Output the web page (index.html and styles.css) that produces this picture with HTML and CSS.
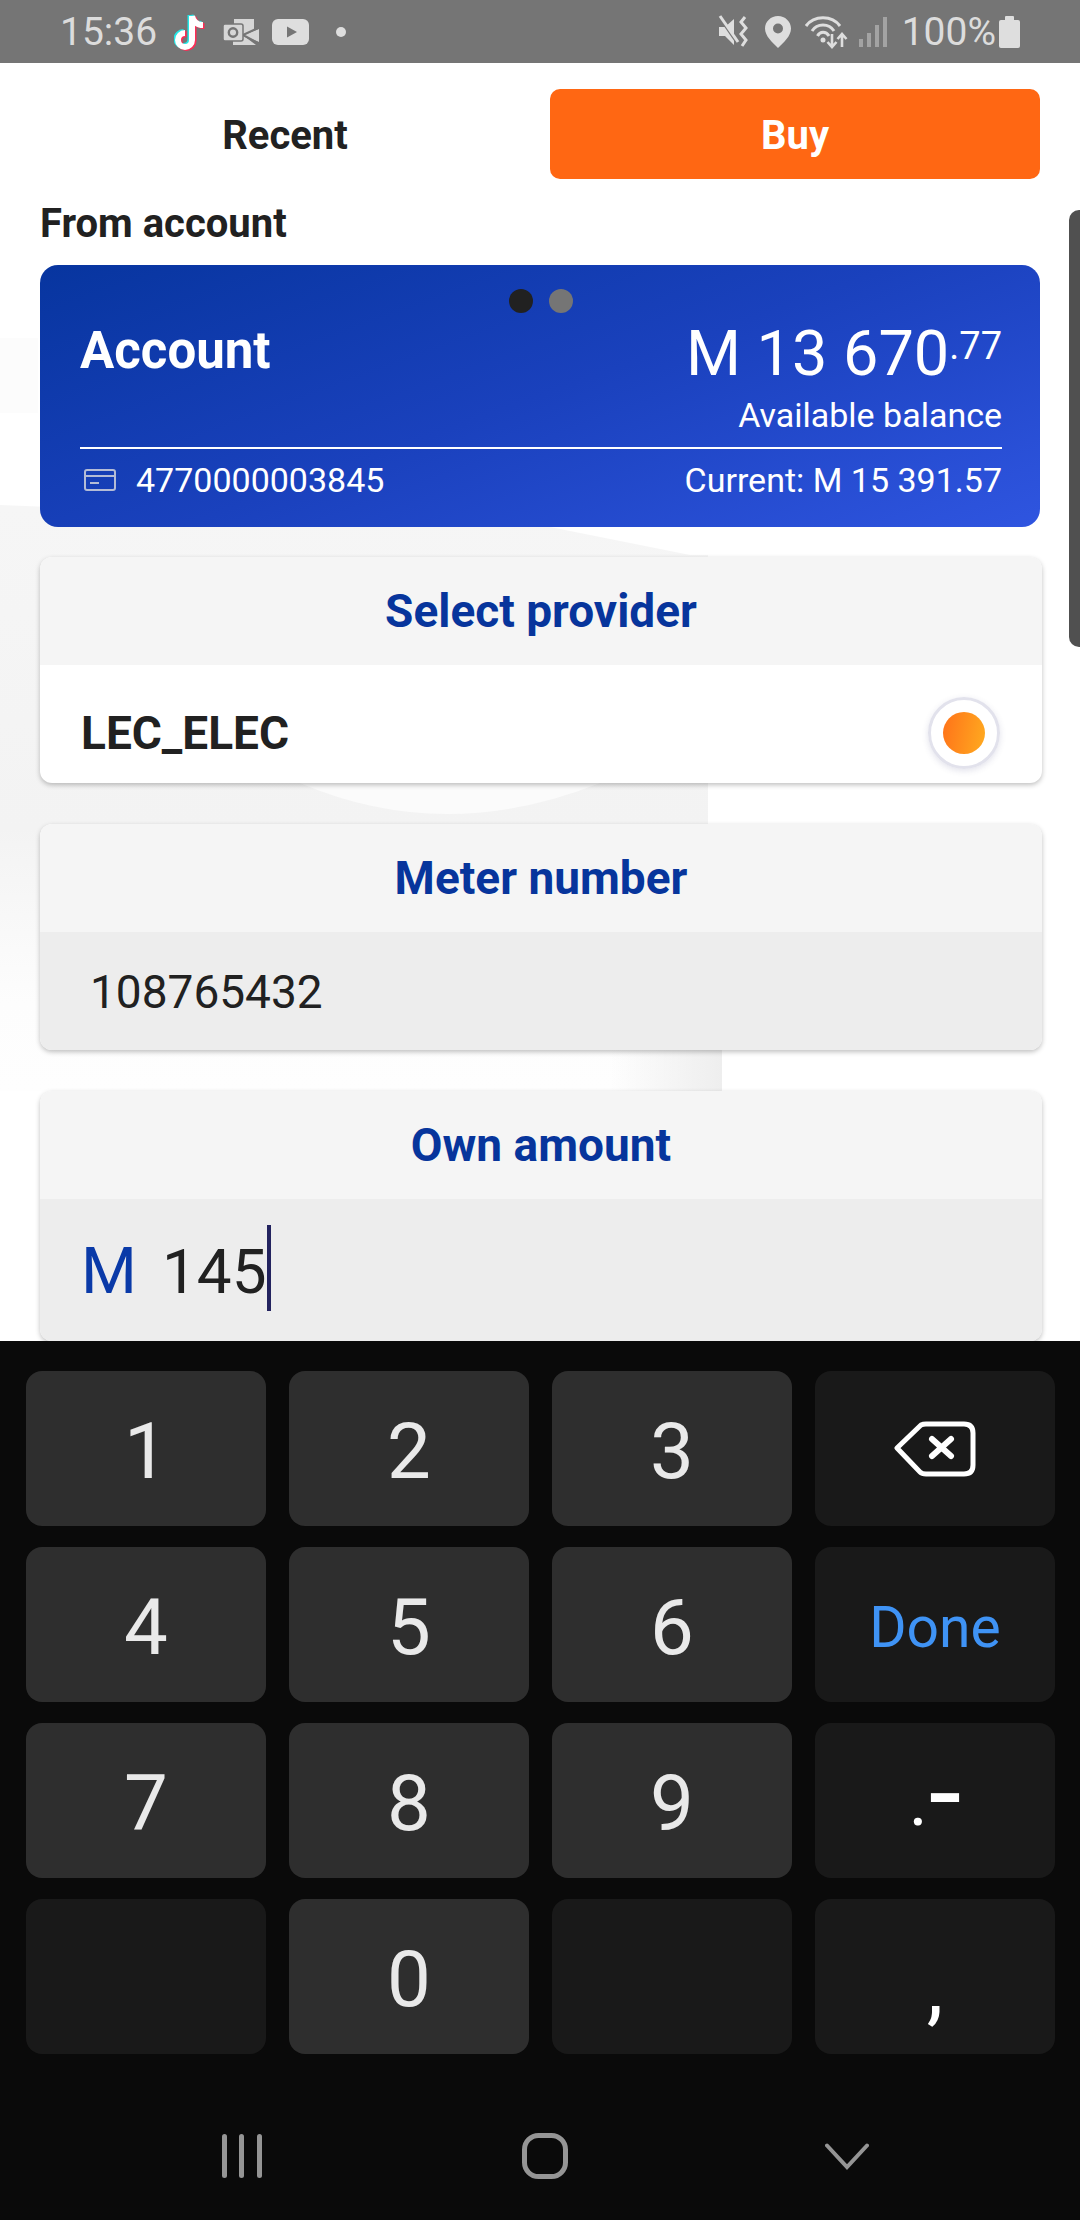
FILE: index.html
```html
<!DOCTYPE html>
<html lang="en">
<head>
    <meta charset="UTF-8">
    <meta name="viewport" content="width=device-width, initial-scale=1.0">
    <title>Buy electricity</title>
    <link rel="stylesheet" href="styles.css">
</head>
<body>
    <!-- status bar -->
    <div class="status-bar">
        <div class="status-left">
            <span class="clock">15:36</span>
            <svg class="ic-tiktok" width="34" height="38" viewBox="0 0 34 38" fill="none" stroke-width="6">
                <path d="M18 3V27a7 7 0 1 1-7-7M18 3c1 5 5 9 11 9" stroke="#25e6e6" transform="translate(-1.5 -1)"/>
                <path d="M18 3V27a7 7 0 1 1-7-7M18 3c1 5 5 9 11 9" stroke="#fd2c55" transform="translate(1.5 1)"/>
                <path d="M18 3V27a7 7 0 1 1-7-7M18 3c1 5 5 9 11 9" stroke="#fff"/>
            </svg>
            <svg class="ic-mail" width="36" height="28" viewBox="0 0 36 28">
                <path d="M11 1H31V12L21 17L36 11V24L21 18L33 27H10V21H11Z" fill="#d6d6d6"/>
                <path d="M20 17L35 10M20 17L35 25" stroke="#757575" stroke-width="2" fill="none"/>
                <rect x="0" y="6" width="20" height="17" rx="2" fill="#d6d6d6" stroke="#757575" stroke-width="1.5"/>
                <circle cx="10" cy="14.5" r="4.2" fill="none" stroke="#757575" stroke-width="2.4"/>
            </svg>
            <svg class="ic-yt" width="37" height="26" viewBox="0 0 37 26">
                <rect width="37" height="26" rx="6" fill="#dedede"/>
                <path d="M15 7.5L25 13L15 18.5Z" fill="#757575"/>
            </svg>
            <span class="status-dot"></span>
        </div>
        <div class="status-right">
            <svg width="33" height="33" viewBox="0 0 33 33">
                <path d="M1 12H7L16 4V30L7 21H1Z" fill="#dedede"/>
                <path d="M2 3L20 29" stroke="#757575" stroke-width="3"/>
                <path d="M2 1L20 27" stroke="#dedede" stroke-width="3"/>
                <path d="M27 2L23 7L28 13L23 19L28 25L24 31" stroke="#dedede" stroke-width="3" fill="none"/>
            </svg>
            <svg class="ic-pin" width="26" height="32" viewBox="0 0 26 32">
                <path fill-rule="evenodd" d="M13 0C6 0 0 5.500 0 12.500C0 20 7 26 13 32C19 26 26 20 26 12.500C26 5.500 20 0 13 0ZM13 7.500a5 5 0 1 1 0 10a5 5 0 1 1 0-10Z" fill="#dedede"/>
            </svg>
            <svg class="ic-wifi" width="43" height="34" viewBox="0 0 43 34" fill="none" stroke="#dedede">
                <path d="M1 11C9 0 27 0 35 11" stroke-width="3"/>
                <path d="M7 16C12 8 24 8 29 16" stroke-width="3"/>
                <path d="M12.500 21C15 16 21 16 24 21" stroke-width="3"/>
                <circle cx="18" cy="25" r="2.500" fill="#dedede" stroke="none"/>
                <path d="M27 19V32M22.500 27L27 32L31.500 27" stroke-width="2.600"/>
                <path d="M37 32V19M32.500 24L37 19L41.500 24" stroke-width="2.600"/>
            </svg>
            <svg class="ic-signal" width="28" height="30" viewBox="0 0 28 30" fill="#a3a3a3">
                <rect x="0" y="22" width="4" height="8"/>
                <rect x="8" y="16" width="4" height="14"/>
                <rect x="16" y="8" width="4" height="22"/>
                <rect x="24" y="0" width="4" height="30"/>
            </svg>
            <span class="batt-text">100%</span>
            <svg class="ic-batt" width="21" height="32" viewBox="0 0 21 32" fill="#dedede">
                <rect x="6" y="0" width="9" height="5" rx="1"/>
                <rect x="0" y="4" width="21" height="28" rx="2"/>
            </svg>
        </div>
    </div>

    <div class="screen">
        <!-- faint background picture -->
        <svg class="bg-art" width="1080" height="1278" viewBox="0 0 1080 1278">
            <defs>
                <linearGradient id="fade-down" x1="0" y1="0" x2="0" y2="1">
                    <stop offset="0" stop-color="#f6f6f6"/>
                    <stop offset="0.55" stop-color="#f3f3f3"/>
                    <stop offset="0.85" stop-color="#fdfdfd"/>
                    <stop offset="1" stop-color="#fefefe"/>
                </linearGradient>
                <linearGradient id="fade-side" x1="0" y1="0" x2="1" y2="0">
                    <stop offset="0" stop-color="#eeeeee" stop-opacity="0"/>
                    <stop offset="1" stop-color="#eeeeee"/>
                </linearGradient>
            </defs>
            <path d="M0 275H38V350H0Z" fill="#fcfcfc"/>
            <path d="M0 442L550 464L690 492L708 492V1028H0Z" fill="url(#fade-down)"/>
            <path d="M610 800H722V1028H610Z" fill="url(#fade-side)"/>
            <path d="M290 700L300 720Q445 782 600 720L610 700Z" fill="#fbfbfb"/>
        </svg>
        <div class="scrollbar"></div>

        <div class="tabs">
            <div class="tab">Recent</div>
            <div class="tab tab-active">Buy</div>
        </div>

        <div class="section-label">From account</div>

        <div class="account-card">
            <div class="dots"><span class="dot dot-on"></span><span class="dot"></span></div>
            <div class="account-top">
                <div class="account-name">Account</div>
                <div class="balance">M 13 670<span class="cents">.77</span></div>
            </div>
            <div class="balance-label">Available balance</div>
            <div class="account-bottom">
                <div class="account-no">
                    <svg width="32" height="22" viewBox="0 0 32 22" fill="none" stroke="#b4bcd6" stroke-width="2">
                        <rect x="1" y="1" width="30" height="20" rx="2"/>
                        <path d="M1 7H31"/>
                        <path d="M6 14H15"/>
                    </svg>
                    <span>4770000003845</span>
                </div>
                <div class="current">Current: M 15 391.57</div>
            </div>
        </div>

        <div class="field provider">
            <div class="field-head">Select provider</div>
            <div class="provider-row">
                <span class="provider-name">LEC_ELEC</span>
                <span class="radio"><span class="radio-in"></span></span>
            </div>
        </div>

        <div class="field meter">
            <div class="field-head">Meter number</div>
            <div class="meter-input">108765432</div>
        </div>

        <div class="field amount">
            <div class="field-head">Own amount</div>
            <div class="amount-input">
                <span class="currency">M</span>
                <span class="amount-value">145</span>
                <span class="caret"></span>
            </div>
        </div>
    </div>

    <!-- keyboard -->
    <div class="keyboard">
        <div class="keys">
            <div class="key">1</div>
            <div class="key">2</div>
            <div class="key">3</div>
            <div class="key key-dark key-back">
                <svg width="82" height="56" viewBox="0 0 82 56" fill="none" stroke="#fff" stroke-width="5" stroke-linejoin="round" stroke-linecap="round">
                    <path d="M3 27L27 4Q29 3 32 3H70Q79 3 79 12V44Q79 53 70 53H32Q28 53 26 51Z"/>
                    <path d="M38 18L57 35M57 18L38 35" stroke-width="6"/>
                </svg>
            </div>
            <div class="key">4</div>
            <div class="key">5</div>
            <div class="key">6</div>
            <div class="key key-dark key-done">Done</div>
            <div class="key">7</div>
            <div class="key">8</div>
            <div class="key">9</div>
            <div class="key key-dark key-sym">.<span class="dash">-</span></div>
            <div class="key key-dark"></div>
            <div class="key">0</div>
            <div class="key key-dark"></div>
            <div class="key key-dark key-comma">,</div>
        </div>
        <div class="nav-bar">
            <svg width="40" height="44" viewBox="0 0 40 44" fill="#959595">
                <rect x="0" y="0" width="5" height="44" rx="2.500"/>
                <rect x="17" y="0" width="5" height="44" rx="2.500"/>
                <rect x="35" y="0" width="5" height="44" rx="2.500"/>
            </svg>
            <svg class="nav-home" width="46" height="46" viewBox="0 0 46 46" fill="none" stroke="#959595" stroke-width="5">
                <rect x="2.500" y="2.500" width="41" height="41" rx="14"/>
            </svg>
            <svg width="44" height="27" viewBox="0 0 44 27" fill="none" stroke="#959595" stroke-width="4" stroke-linecap="round">
                <path d="M2 2.500L22 24L42 2.500"/>
            </svg>
        </div>
    </div>
</body>
</html>
```

FILE: styles.css
```css
* {
    box-sizing: border-box;
}

html, body {
    margin: 0;
    padding: 0;
}

body {
    width: 1080px;
    height: 2220px;
    overflow: hidden;
    background-color: #fff;
    font-family: Roboto, "Liberation Sans", sans-serif;
    color: #212121;
}

/* status bar */
.status-bar {
    height: 63px;
    background-color: #757575;
    display: flex;
    justify-content: space-between;
    align-items: center;
    padding: 0 60px 0 60px;
    color: #dcdcdc;
}

.status-left,
.status-right {
    display: flex;
    align-items: center;
}

.clock {
    font-size: 39px;
    margin-right: 17px;
}

.ic-tiktok {
    margin-right: 15px;
}

.ic-mail {
    margin-right: 13px;
}

.status-dot {
    width: 10px;
    height: 10px;
    margin-left: 27px;
    border-radius: 50%;
    background-color: #dedede;
}

.ic-pin {
    margin: 0 14px;
}

.ic-wifi {
    margin-right: 11px;
}

.ic-signal {
    margin-right: 1px;
}

.batt-text {
    font-size: 39px;
    margin: 0 3px 0 14px;
}

/* main screen */
.screen {
    position: relative;
    height: 1278px;
    padding: 26px 40px 0;
    overflow: hidden;
}

.bg-art {
    position: absolute;
    top: 0;
    left: 0;
}

.scrollbar {
    position: absolute;
    top: 147px;
    right: 0;
    width: 11px;
    height: 437px;
    background-color: #505050;
    border-radius: 10px 0 0 10px;
}

.tabs,
.section-label,
.account-card,
.field {
    position: relative;
}

.tabs {
    display: grid;
    grid-template-columns: 490px 490px;
    gap: 20px;
    height: 90px;
}

.tab {
    display: flex;
    align-items: center;
    justify-content: center;
    padding-top: 3px;
    font-size: 40px;
    font-weight: 700;
    border-radius: 10px;
}

.tab-active {
    background-color: #ff6713;
    color: #fff;
}

.section-label {
    height: 86px;
    padding-top: 25px;
    font-size: 40px;
    font-weight: 700;
    line-height: 40px;
}

/* account card */
.account-card {
    width: 1000px;
    height: 262px;
    padding: 24px 38px 0 40px;
    margin-bottom: 30px;
    border-radius: 18px;
    color: #fff;
    background: linear-gradient(160deg, #07359f 0%, #1a41bd 50%, #2f55e0 100%);
}

.dots {
    display: flex;
    justify-content: center;
    gap: 16px;
    height: 24px;
}

.dot {
    width: 24px;
    height: 24px;
    border-radius: 50%;
    background-color: #757575;
}

.dot-on {
    background-color: #212121;
}

.account-top {
    display: flex;
    justify-content: space-between;
    align-items: center;
    height: 74px;
}

.account-name {
    font-size: 51px;
    font-weight: 700;
}

.balance {
    font-size: 63px;
    line-height: 74px;
}

.cents {
    font-size: 38px;
    vertical-align: 16px;
}

.balance-label {
    text-align: right;
    font-size: 34px;
    line-height: 40px;
    padding-top: 8px;
    height: 60px;
}

.account-bottom {
    display: flex;
    justify-content: space-between;
    align-items: center;
    height: 50px;
    padding-top: 14px;
    border-top: 2px solid #fff;
    font-size: 34px;
}

.account-no {
    display: flex;
    align-items: center;
    gap: 20px;
    padding-left: 4px;
}

/* form fields */
.field {
    width: 1002px;
    border-radius: 12px;
    overflow: hidden;
    box-shadow: 0 2px 5px rgba(0, 0, 0, 0.25);
    background-color: #fff;
}

.provider {
    height: 226px;
    margin-bottom: 41px;
}

.meter {
    height: 226px;
    margin-bottom: 41px;
}

.amount {
    height: 250px;
}

.field-head {
    height: 108px;
    display: flex;
    align-items: center;
    justify-content: center;
    background-color: #f5f5f5;
    color: #07359c;
    font-size: 46px;
    font-weight: 700;
}

.provider-row {
    display: flex;
    justify-content: space-between;
    align-items: center;
    height: 118px;
    padding: 18px 42px 0 41px;
}

.provider-name {
    font-size: 46px;
    font-weight: 700;
}

.radio {
    display: flex;
    align-items: center;
    justify-content: center;
    width: 72px;
    height: 72px;
    border: 3px solid #e2e2ec;
    border-radius: 50%;
    box-shadow: 0 2px 6px rgba(60, 60, 120, 0.15);
}

.radio-in {
    width: 42px;
    height: 42px;
    border-radius: 50%;
    background: linear-gradient(100deg, #ff7219, #ffab20);
}

.meter-input {
    height: 118px;
    padding: 2px 0 0 50px;
    display: flex;
    align-items: center;
    background-color: #ededed;
    font-size: 46px;
}

.amount-input {
    height: 142px;
    padding: 26px 0 0 41px;
    display: flex;
    align-items: flex-start;
    background-color: #ededed;
    font-size: 62px;
    line-height: 86px;
}

.currency {
    padding-top: 4px;
    color: #0a3aa8;
    width: 81px;
    font-size: 64px;
}

.amount-value {
    padding-top: 4px;
}

.caret {
    width: 4px;
    height: 86px;
    background-color: #23235f;
}

/* keyboard */
.keyboard {
    height: 879px;
    background-color: #0a0a0a;
    padding-top: 30px;
}

.keys {
    display: grid;
    grid-template-columns: repeat(4, 240px);
    grid-auto-rows: 155px;
    column-gap: 23px;
    row-gap: 21px;
    padding-left: 26px;
}

.key {
    display: flex;
    align-items: center;
    justify-content: center;
    padding-top: 6px;
    background-color: #2e2e2e;
    border-radius: 16px;
    color: #e9e9e9;
    font-size: 78px;
}

.key-dark {
    background-color: #191919;
    color: #fff;
}

.key-back {
    padding-top: 0;
}

.key-done {
    color: #3f93f5;
    font-size: 57px;
}

.key-sym {
    font-size: 72px;
    padding-top: 0;
}

.dash {
    font-size: 118px;
    line-height: 1;
    margin-left: 1px;
    padding-bottom: 14px;
}

.key-comma {
    font-size: 84px;
    padding-top: 20px;
}

.nav-bar {
    display: flex;
    align-items: center;
    padding: 79px 0 0 222px;
}

.nav-home {
    margin: 0 257px 0 260px;
}
```
